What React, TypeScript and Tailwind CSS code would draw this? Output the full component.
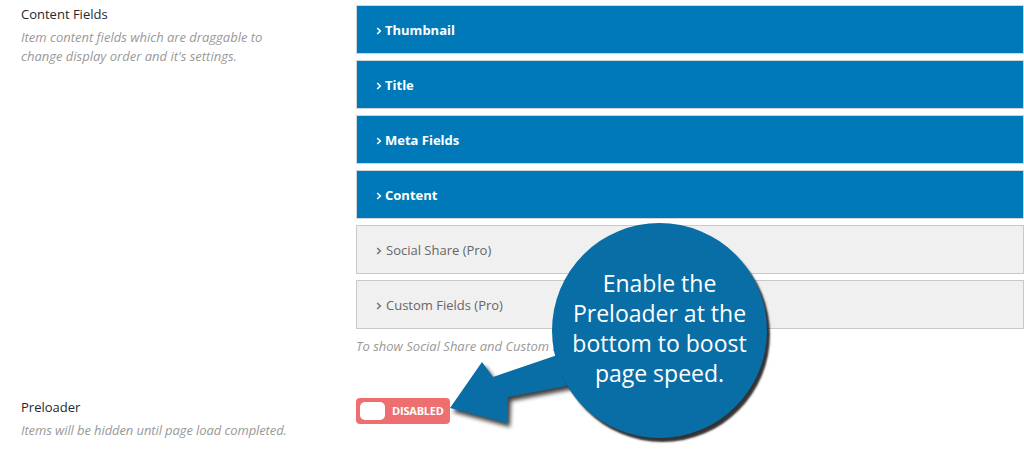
import React from "react";

const fields = [
  { label: "Thumbnail", pro: false },
  { label: "Title", pro: false },
  { label: "Meta Fields", pro: false },
  { label: "Content", pro: false },
  { label: "Social Share (Pro)", pro: true },
  { label: "Custom Fields (Pro)", pro: true },
];

function Chevron({ color }: { color: string }) {
  return (
    <svg width="6" height="8" viewBox="0 0 6 8" className="shrink-0">
      <path d="M1.2 1 L4.3 4 L1.2 7" fill="none" stroke={color} strokeWidth="1.6" />
    </svg>
  );
}

function FieldBar({ label, pro }: { label: string; pro: boolean }) {
  return (
    <div
      className={
        pro
          ? "h-[49px] flex items-center gap-[4px] pl-[19px] pt-[2px] border border-[#c9c9c9] bg-[#f0f0f0] text-[#666] text-[13px]"
          : "h-[49px] flex items-center gap-[3px] pl-[19px] pt-[2px] border border-[#cfd6dc] bg-[#0079b8] text-white text-[13px] font-bold"
      }
    >
      <Chevron color={pro ? "#777" : "#fff"} />
      <span>{label}</span>
    </div>
  );
}

export default function App() {
  return (
    <div
      className="relative w-[1024px] h-[456px] overflow-hidden bg-white"
      style={{ fontFamily: '"Open Sans", "Noto Sans", sans-serif' }}
    >
      <div className="flex flex-col gap-[42px] pt-[5px]">
        {/* Content fields row */}
        <div className="flex">
          <div className="w-[356px] shrink-0 pl-[21px] pr-4">
            <div className="text-[13px] leading-[19px] text-[#23282d] mb-[4px]">Content Fields</div>
            <p className="text-[13px] leading-[19px] italic text-[#999] w-[260px]">
              Item content fields which are draggable to change display order and it's settings.
            </p>
          </div>
          <div className="flex-1">
            <div className="flex flex-col gap-[6px]">
              {fields.map((f) => (
                <FieldBar key={f.label} label={f.label} pro={f.pro} />
              ))}
            </div>
            <p className="mt-[8px] text-[13px] leading-[19px] italic text-[#999]">
              To show Social Share and Custom Fields
            </p>
          </div>
        </div>

        {/* Preloader row */}
        <div className="flex">
          <div className="w-[356px] shrink-0 pl-[21px] pr-4">
            <div className="text-[13px] leading-[19px] text-[#23282d] mb-[4px]">Preloader</div>
            <p className="text-[13px] leading-[19px] italic text-[#999] tracking-[-0.1px]">
              Items will be hidden until page load completed.
            </p>
          </div>
          <div className="flex-1">
            <div className="w-[94px] h-[26px] rounded-[4px] bg-[#ee6f6f] flex items-center pl-[4px] gap-[7px]">
              <div className="w-[25px] h-[18px] rounded-[5px] bg-white" />
              <span className="text-white text-[11px] font-bold tracking-[-0.2px]">DISABLED</span>
            </div>
          </div>
        </div>
      </div>

      {/* Callout arrow */}
      <svg
        className="absolute left-0 top-0 pointer-events-none"
        width="1024"
        height="456"
        style={{ filter: "drop-shadow(3px 4px 2px rgba(0,0,0,0.75))" }}
      >
        <polygon
          points="450,408 482,362 493,377 572,350 576,384 508,397 507,423"
          fill="#0a6ea6"
        />
      </svg>

      {/* Callout bubble */}
      <div className="absolute left-[552px] top-[223px] w-[215px] h-[215px] rounded-full bg-[#0a6ea6] shadow-[3px_4px_2px_rgba(0,0,0,0.8)] flex items-center justify-center">
        <p
          className="text-white text-[23px] leading-[30px] text-center pb-[6px]"
          style={{ fontFamily: '"Open Sans", sans-serif' }}
        >
          Enable the
          <br />
          Preloader at the
          <br />
          bottom to boost
          <br />
          page speed.
        </p>
      </div>
    </div>
  );
}
